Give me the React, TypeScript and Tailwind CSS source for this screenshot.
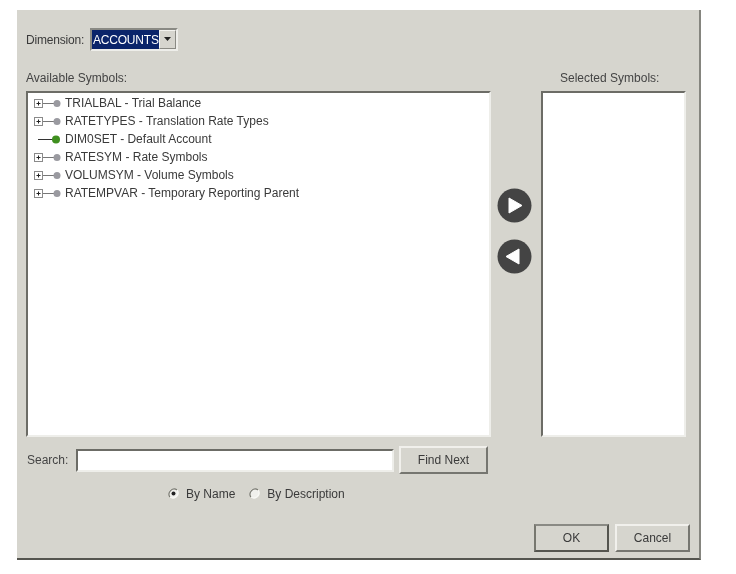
const font = "font-['Liberation_Sans',Arial,sans-serif]";

const symbols = [
  { label: "TRIALBAL - Trial Balance", leaf: false },
  { label: "RATETYPES - Translation Rate Types", leaf: false },
  { label: "DIM0SET - Default Account", leaf: true },
  { label: "RATESYM - Rate Symbols", leaf: false },
  { label: "VOLUMSYM - Volume Symbols", leaf: false },
  { label: "RATEMPVAR - Temporary Reporting Parent", leaf: false },
];

function TreeRow({ label, leaf }: { label: string; leaf: boolean }) {
  return (
    <div className="flex h-[18px] items-center">
      <svg className="h-[18px] w-[35px] shrink-0" viewBox="0 0 35 18">
        {leaf ? (
          <>
            <path d="M10 8.5H25" stroke="#333" strokeWidth="1" />
            <circle cx="28" cy="8.5" r="4" fill="#3f8f1f" />
          </>
        ) : (
          <>
            <rect x="6.5" y="4.5" width="8" height="8" fill="#fff" stroke="#8a8a8a" />
            <path d="M8.5 8.5H12.5M10.5 6.5V10.5" stroke="#222" strokeWidth="1" />
            <path d="M15 8.5H26" stroke="#777" strokeWidth="1" />
            <circle cx="29" cy="8.5" r="3.5" fill="#9a9aa0" />
          </>
        )}
      </svg>
      <span className="-mt-[2px] ml-[2px] whitespace-nowrap text-[12px] text-[#3a3a3a]">{label}</span>
    </div>
  );
}

function ArrowButton({ dir }: { dir: "right" | "left" }) {
  return (
    <svg className="h-[35px] w-[35px]" viewBox="0 0 35 35">
      <circle cx="17.5" cy="17.5" r="17" fill="#444" />
      {dir === "right" ? (
        <path d="M12 10L25 17.5L12 25Z" fill="#fff" stroke="#fff" strokeWidth="1" strokeLinejoin="round" />
      ) : (
        <path d="M22 10L9 17.5L22 25Z" fill="#fff" stroke="#fff" strokeWidth="1" strokeLinejoin="round" />
      )}
    </svg>
  );
}

function Radio({ checked, label }: { checked: boolean; label: string }) {
  return (
    <div className="flex items-center gap-[6px]">
      <svg className="-mt-[2px] h-[13px] w-[13px]" viewBox="0 0 13 13">
        <circle cx="6.5" cy="6.5" r="5" fill="#f0f0ec" />
        <path d="M2.9 10.1A5.2 5.2 0 0 1 10.1 2.9" fill="none" stroke="#77776f" strokeWidth="1.2" />
        <path d="M10.1 2.9A5.2 5.2 0 0 1 2.9 10.1" fill="none" stroke="#f8f8f4" strokeWidth="1.2" />
        {checked && <circle cx="6.5" cy="6.5" r="2" fill="#222" />}
      </svg>
      <span className="text-[12px] text-[#3a3a3a]">{label}</span>
    </div>
  );
}

function Win95Button({ children, className }: { children: string; className: string }) {
  return (
    <div className={`flex items-center justify-center border-2 text-[12px] text-[#3a3a3a] ${className}`}>
      {children}
    </div>
  );
}

const raised = "border-t-[#f1f0ec] border-l-[#f1f0ec] border-r-[#767670] border-b-[#767670]";

export default function App() {
  return (
    <div className={`h-[574px] w-[736px] overflow-hidden bg-white pl-[17px] pt-[10px] ${font}`}>
      <div className="flex h-[550px] w-[684px] flex-col border-b-2 border-r-2 border-b-[#55554f] border-r-[#85857f] bg-[#d6d5ce] blur-[0.6px]">
        {/* Dimension row */}
        <div className="mt-[17px] flex h-[24px] items-center pl-[9px]">
          <span className="w-[64px] pt-[2px] text-[12px] tracking-[-0.2px] text-[#3a3a3a]">Dimension:</span>
          <div className="flex h-[23px] w-[88px] items-center border-2 border-t-[#8a8a84] border-l-[#8a8a84] border-r-[#eeeeea] border-b-[#eeeeea]">
            <div className="flex h-full flex-1 items-center bg-[#0a246a] pl-[1px] pt-[2px] text-[12px] tracking-[-0.2px] text-white">ACCOUNTS</div>
            <div className="flex h-full w-[17px] items-center justify-center border border-t-[#f4f4f0] border-l-[#f4f4f0] border-r-[#8a8a84] border-b-[#8a8a84]">
              <svg className="h-[4px] w-[7px]" viewBox="0 0 7 4">
                <path d="M0 0H7L3.5 4Z" fill="#222" />
              </svg>
            </div>
          </div>
        </div>

        {/* Column labels */}
        <div className="mt-[20px] flex h-[14px] items-center pl-[9px] pr-[26px] text-[12px] text-[#444]">
          <span className="w-[534px]">Available Symbols:</span>
          <span>Selected Symbols:</span>
        </div>

        {/* Lists and arrows */}
        <div className="mt-[6px] flex h-[346px] pl-[9px]">
          <div className="w-[465px] border-2 border-t-[#6c6c66] border-l-[#6c6c66] border-r-[#eeeeea] border-b-[#eeeeea] bg-white pt-[2px]">
            {symbols.map((s) => (
              <TreeRow key={s.label} label={s.label} leaf={s.leaf} />
            ))}
          </div>
          <div className="mr-[4px] flex w-[46px] flex-col items-center gap-[16px] pt-[97px]">
            <ArrowButton dir="right" />
            <ArrowButton dir="left" />
          </div>
          <div className="w-[145px] border-2 border-t-[#6c6c66] border-l-[#6c6c66] border-r-[#eeeeea] border-b-[#eeeeea] bg-white" />
        </div>

        {/* Search */}
        <div className="mt-[9px] flex h-[28px] items-center pl-[10px]">
          <span className="w-[49px] text-[12px] text-[#444]">Search:</span>
          <div className="h-[23px] w-[318px] border-2 border-t-[#6c6c66] border-l-[#6c6c66] border-r-[#eeeeea] border-b-[#eeeeea] bg-white" />
          <Win95Button className={`ml-[5px] h-[28px] w-[89px] ${raised}`}>Find Next</Win95Button>
        </div>

        {/* Search mode */}
        <div className="mt-[13px] flex h-[14px] items-center gap-[13px] pl-[150px]">
          <Radio checked label="By Name" />
          <Radio checked={false} label="By Description" />
        </div>

        {/* Footer buttons */}
        <div className="mt-[23px] flex justify-end gap-[6px] pr-[9px]">
          <Win95Button className="h-[28px] w-[75px] border-t-[#8a8a84] border-l-[#77776f] border-r-[#55554f] border-b-[#55554f]">OK</Win95Button>
          <Win95Button className={`h-[28px] w-[75px] ${raised}`}>Cancel</Win95Button>
        </div>
      </div>
    </div>
  );
}
